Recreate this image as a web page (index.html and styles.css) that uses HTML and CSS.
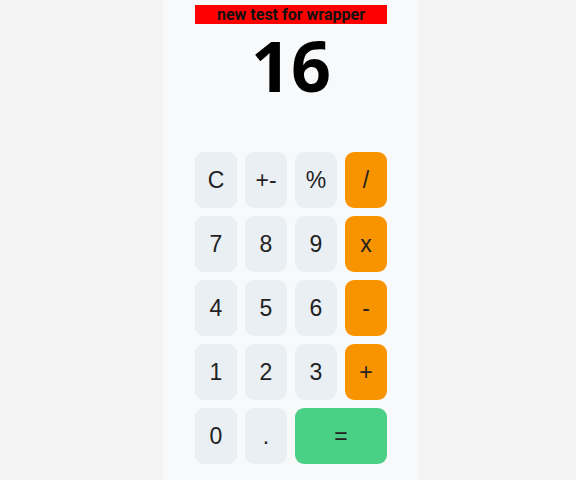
FILE: index.html
```html
<!DOCTYPE html>
<html>
<head>
<meta charset="utf-8">
<link rel="stylesheet" href="styles.css">
</head>
<body>
<div class="page">
  <div class="calc">
    <div class="label">new test for wrapper</div>
    <div class="display">16</div>
    <div class="keys">
      <button class="key">C</button>
      <button class="key">+-</button>
      <button class="key">%</button>
      <button class="key op">/</button>
      <button class="key">7</button>
      <button class="key">8</button>
      <button class="key">9</button>
      <button class="key op">x</button>
      <button class="key">4</button>
      <button class="key">5</button>
      <button class="key">6</button>
      <button class="key op">-</button>
      <button class="key">1</button>
      <button class="key">2</button>
      <button class="key">3</button>
      <button class="key op">+</button>
      <button class="key">0</button>
      <button class="key">.</button>
      <button class="key eq">=</button>
    </div>
  </div>
</div>
</body>
</html>
```

FILE: styles.css
```css
html, body {
  margin: 0;
  padding: 0;
  background: #f3f3f4;
}
.page {
  display: flex;
  justify-content: center;
  padding-left: 6px;
  min-height: 480px;
}
.calc {
  width: 192px;
  padding: 5px 32px 0;
  background: #f8f9fb;
  min-height: 475px;
}
.label {
  background: #ff0000;
  color: #111;
  font-family: Roboto, "Liberation Sans", sans-serif;
  font-weight: 700;
  font-size: 16px;
  line-height: 19px;
  height: 19px;
  overflow: hidden;
  text-align: center;
}
.display {
  margin-top: 6px;
  font-family: "Open Sans", "Liberation Sans", sans-serif;
  font-weight: 700;
  font-size: 70px;
  line-height: 70px;
  height: 70px;
  text-align: center;
  color: #000;
}
.keys {
  margin-top: 52px;
  display: grid;
  grid-template-columns: repeat(4, 42px);
  grid-auto-rows: 56px;
  gap: 8px;
}
.key {
  border: none;
  border-radius: 9px;
  background: #e9eff3;
  color: #222;
  font-family: "Liberation Sans", Arial, sans-serif;
  font-size: 23px;
  padding: 0;
  margin: 0;
}
.op {
  background: #f79400;
}
.eq {
  grid-column: span 2;
  background: #4bd087;
}
```
